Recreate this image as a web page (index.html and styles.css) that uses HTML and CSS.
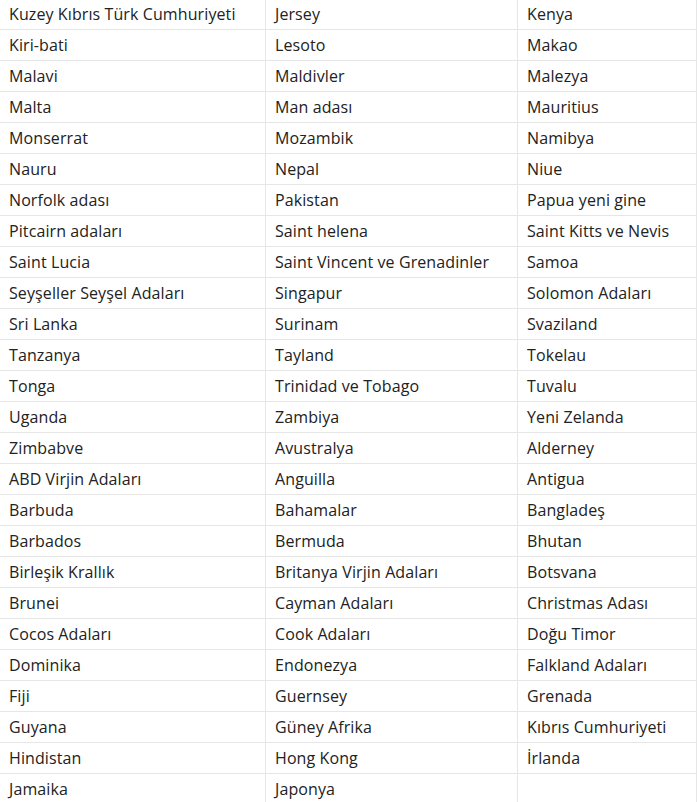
FILE: index.html
```html
<!DOCTYPE html>
<html lang="tr">
<head>
<meta charset="utf-8">
<link rel="stylesheet" href="styles.css">
</head>
<body>
<table class="countries">
<colgroup><col class="c1"><col class="c2"><col class="c3"></colgroup>
<tbody>
<tr><td>Kuzey Kıbrıs Türk Cumhuriyeti</td><td>Jersey</td><td>Kenya</td></tr>
<tr><td>Kiri-bati</td><td>Lesoto</td><td>Makao</td></tr>
<tr><td>Malavi</td><td>Maldivler</td><td>Malezya</td></tr>
<tr><td>Malta</td><td>Man adası</td><td>Mauritius</td></tr>
<tr><td>Monserrat</td><td>Mozambik</td><td>Namibya</td></tr>
<tr><td>Nauru</td><td>Nepal</td><td>Niue</td></tr>
<tr><td>Norfolk adası</td><td>Pakistan</td><td>Papua yeni gine</td></tr>
<tr><td>Pitcairn adaları</td><td>Saint helena</td><td>Saint Kitts ve Nevis</td></tr>
<tr><td>Saint Lucia</td><td>Saint Vincent ve Grenadinler</td><td>Samoa</td></tr>
<tr><td>Seyşeller Seyşel Adaları</td><td>Singapur</td><td>Solomon Adaları</td></tr>
<tr><td>Sri Lanka</td><td>Surinam</td><td>Svaziland</td></tr>
<tr><td>Tanzanya</td><td>Tayland</td><td>Tokelau</td></tr>
<tr><td>Tonga</td><td>Trinidad ve Tobago</td><td>Tuvalu</td></tr>
<tr><td>Uganda</td><td>Zambiya</td><td>Yeni Zelanda</td></tr>
<tr><td>Zimbabve</td><td>Avustralya</td><td>Alderney</td></tr>
<tr><td>ABD Virjin Adaları</td><td>Anguilla</td><td>Antigua</td></tr>
<tr><td>Barbuda</td><td>Bahamalar</td><td>Bangladeş</td></tr>
<tr><td>Barbados</td><td>Bermuda</td><td>Bhutan</td></tr>
<tr><td>Birleşik Krallık</td><td>Britanya Virjin Adaları</td><td>Botsvana</td></tr>
<tr><td>Brunei</td><td>Cayman Adaları</td><td>Christmas Adası</td></tr>
<tr><td>Cocos Adaları</td><td>Cook Adaları</td><td>Doğu Timor</td></tr>
<tr><td>Dominika</td><td>Endonezya</td><td>Falkland Adaları</td></tr>
<tr><td>Fiji</td><td>Guernsey</td><td>Grenada</td></tr>
<tr><td>Guyana</td><td>Güney Afrika</td><td>Kıbrıs Cumhuriyeti</td></tr>
<tr><td>Hindistan</td><td>Hong Kong</td><td>İrlanda</td></tr>
<tr><td>Jamaika</td><td>Japonya</td><td></td></tr>
</tbody>
</table>
</body>
</html>
```
FILE: styles.css
```css
html, body {
  margin: 0;
  padding: 0;
  background: #ffffff;
}
body {
  overflow: hidden;
}
.countries {
  border-collapse: collapse;
  table-layout: fixed;
  width: 697px;
  margin: -2px 0 0 -1px;
  font-family: "Open Sans", "Noto Sans", sans-serif;
  font-size: 16px;
  letter-spacing: 0.1px;
  color: #222222;
}
.c1 { width: 266px; }
.c2 { width: 252px; }
.c3 { width: 179px; }
.countries td {
  border: 1px solid #e6e6e6;
  height: 31px;
  padding: 0 0 0 9px;
  line-height: 20px;
  white-space: nowrap;
  box-sizing: border-box;
}
```
